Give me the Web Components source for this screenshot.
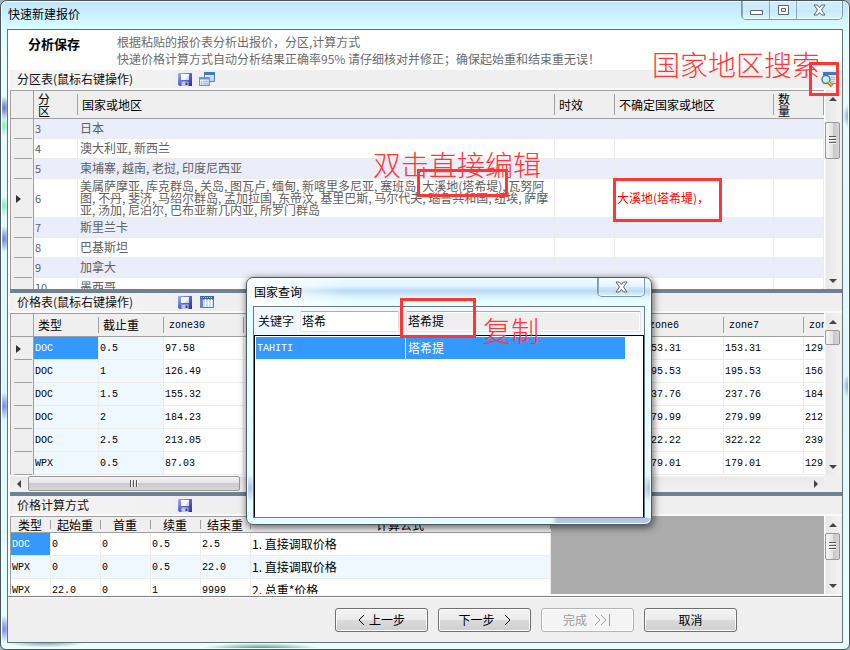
<!DOCTYPE html>
<html lang="zh-CN">
<head>
<meta charset="utf-8">
<title>快速新建报价</title>
<style>
  html, body { height: 100%; }
  body {
    margin: 0; overflow: hidden; background: #9fb3bd; color: #111;
    font: 12px/16px "Noto Sans CJK SC", "Liberation Sans", sans-serif;
    --ui: "Noto Sans CJK SC", "Liberation Sans", sans-serif;
    --mono: "Liberation Mono", "Noto Sans CJK SC", monospace;
    --face: #efefef; --line: #a0a0a0; --red: #ff3636; --sel: #3399ff;
  }
</style>
</head>
<body>
<app-window caption="快速新建报价">
  <page-intro slot="intro" heading="分析保存">
    根据粘贴的报价表分析出报价，分区,计算方式<br>
    快递价格计算方式自动分析结果正确率95% 请仔细核对并修正；确保起始重和结束重无误！
  </page-intro>
  <grid-pane caption="分区表(鼠标右键操作)" tools="save,windows" action="find" style="--offset:15px;--thumb:37px">
    <data-grid source="zones"></data-grid>
  </grid-pane>
  <grid-pane caption="价格表(鼠标右键操作)" tools="save,columns" horizontal plain style="--offset:0px;--thumb:15px">
    <data-grid source="prices"></data-grid>
  </grid-pane>
  <grid-pane caption="价格计算方式" tools="save" style="--offset:0px;--thumb:27px">
    <data-grid source="formulas"></data-grid>
  </grid-pane>
  <push-button slot="actions" label="上一步" before="&lt;"></push-button>
  <push-button slot="actions" label="下一步" after="&gt;"></push-button>
  <push-button slot="actions" label="完成" after="&gt;&gt;|" disabled></push-button>
  <push-button slot="actions" label="取消"></push-button>
</app-window>
<lookup-dialog caption="国家查询"></lookup-dialog>
<mark-box style="left:809px;top:62px;width:30px;height:34px"></mark-box>
<mark-box style="left:417px;top:169px;width:91px;height:28px"></mark-box>
<mark-box style="left:613px;top:178px;width:109px;height:44px"></mark-box>
<mark-box style="left:400px;top:298px;width:76px;height:40px"></mark-box>
<mark-note style="left:652px;top:44px">国家地区搜索</mark-note>
<mark-note style="left:373px;top:144px">双击直接编辑</mark-note>
<mark-note style="left:483px;top:310px">复制</mark-note>

<script>
const ICONS = {
  save: `<svg width="16" height="16" viewBox="0 0 16 16"><defs><linearGradient id="g" x1="0" y1="0" x2="1" y2="1"><stop offset="0" stop-color="#a9b0f6"/><stop offset=".5" stop-color="#5a64d0"/><stop offset="1" stop-color="#2c2c8c"/></linearGradient></defs><path d="M1 2h14v13H2.500L1 13.500z" fill="url(#g)"/><path d="M4 3h8v6H4z" fill="#f6f8ff"/><path d="M8 9l4-5v5z" fill="#cfd6f3"/><path d="M4.500 10.500h7V15h-7z" fill="#c3c8e2"/><path d="M8.500 11.500h2V14h-2z" fill="#3a3a88"/></svg>`,
  windows: `<svg width="16" height="16" viewBox="0 0 16 16"><defs><linearGradient id="w" x1="0" y1="0" x2="1" y2="1"><stop offset="0" stop-color="#fff"/><stop offset="1" stop-color="#a8caf0"/></linearGradient></defs><path d="M5.500 1.500h10v9h-10z" fill="url(#w)" stroke="#5482bb"/><path d="M5 1h11v3H5z" fill="#4a78c0"/><path d="M.5 6.500h10v8H.5z" fill="url(#w)" stroke="#6b94c4"/><path d="M0 6h11v2.500H0z" fill="#6d98d4"/><path d="M2.500 10v4M4 10.500h5M4 12.500h5" stroke="#a9c2e0"/></svg>`,
  columns: `<svg width="16" height="16" viewBox="0 0 16 16"><path d="M1.500 2.500h13v11h-13z" fill="#cfdff6" stroke="#5f78a8"/><path d="M1 2h14v3.500H1z" fill="#44649f"/><path d="M1 5h3v9H1z" fill="#6c88b8"/><path d="M2 3.500h12" stroke="#a9bfe3" stroke-dasharray="1 1"/><path d="M6.500 5v8M9.500 5v8M12.500 5v8" stroke="#fff"/></svg>`,
  find: `<svg width="18" height="17" viewBox="0 0 18 17"><path d="M3.500 1.500h13v11h-13z" fill="#dcebfc" stroke="#5b8ed0"/><path d="M3 1h14v3H3z" fill="#3e79cf"/><path d="M11 6.500h4M11 8.500h4M11 10.500h3" stroke="#9abce4"/><circle cx="6" cy="8.500" r="4" fill="#c5efff" stroke="#5c7687" stroke-width="1.500"/><path d="M3.800 8a2.500 2.500 0 0 1 2.500-2" stroke="#fff" fill="none"/><path d="M8.800 11.500l3.200 3.500" stroke="#a87b1c" stroke-width="3.500"/><path d="M8.700 11l3 3.300" stroke="#f2d064" stroke-width="1.300"/></svg>`,
  close: `<svg width="13" height="12" viewBox="0 0 13 12"><path d="M1 1h3.500l2 2.500L8.500 1H12L8.500 6l3.500 5H8.500l-2-2.500-2 2.500H1l3.500-5z" fill="#f8fcff" stroke="#5b6672" stroke-linejoin="round"/></svg>`,
  min: `<svg width="13" height="12" viewBox="0 0 13 12"><path d="M.5 6.500h12v4H.5z" fill="#fff" stroke="#5b6672"/></svg>`,
  max: `<svg width="13" height="12" viewBox="0 0 13 12"><path d="M1.500 1.500h10v9h-10z" fill="#fff" stroke="#5b6672"/><path d="M4.500 4.500h4v3h-4z" fill="#cfeefa" stroke="#5b6672"/></svg>`
};

class Base extends HTMLElement {
  connectedCallback() {
    if (this.shadowRoot) return;
    this.attachShadow({ mode: 'open' }).innerHTML = '<style>*{box-sizing:border-box}' + this.css() + '</style>' + this.html();
  }
  at(name) {
    return (this.getAttribute(name) || '').replace(/&/g, '&amp;').replace(/</g, '&lt;').replace(/>/g, '&gt;');
  }
}

customElements.define('window-controls', class extends Base {
  css() { return `
    :host { display: flex; border: 1px solid #7f98a5; border-top: 0; border-radius: 0 0 5px 5px; overflow: hidden; box-shadow: inset 0 0 0 1px #ffffffa0; }
    button { border: 0; border-left: 1px solid #8fa8b4; margin: 0; padding: 0; height: 18px; background: linear-gradient(#ffffff50, #ffffff10 50%, #b5d8e640 50%, #ffffff40); display: grid; place-items: center; }
    button:first-child { border-left: 0; }
    .min, .max { width: 27px; } .close { width: 46px; }`; }
  html() {
    const names = { min: '最小化', max: '最大化', close: '关闭' };
    return this.at('kinds').split(',').map(k => `<button class="${k}" aria-label="${names[k]}">${ICONS[k]}</button>`).join('');
  }
});

customElements.define('app-window', class extends Base {
  css() { return `
    :host { display: grid; grid-template-rows: 28px 1fr 6px; height: 100vh; box-sizing: border-box; padding: 0 6px 0 6px; border: 1px solid #47545c; border-radius: 7px 7px 6px 6px;
      background:
        radial-gradient(ellipse 7px 12px at 3px 107px, #6274c4, transparent),
        radial-gradient(ellipse 7px 13px at 3px 238px, #7680d0, transparent),
        radial-gradient(ellipse 7px 14px at 3px 405px, #8089d2, transparent),
        radial-gradient(ellipse 7px 14px at 3px 628px, #8089d2, transparent),
        radial-gradient(ellipse 6px 10px at 3px 125px, #8ceab8, transparent),
        radial-gradient(ellipse 6px 10px at 3px 205px, #8ceab8, transparent),
        radial-gradient(ellipse 6px 12px at 100% 115px, #7f9cc4, transparent),
        radial-gradient(ellipse 6px 12px at 100% 385px, #7f9cc4, transparent),
        radial-gradient(ellipse 60px 6px at 260px 100%, #3b8a78, transparent),
        radial-gradient(ellipse 40px 5px at 45px 99%, #809cb0, transparent),
        linear-gradient(#c2e3f7, #c9edff 10px, #d8ffff 28px, #e9fcff 60px, #dcf7fc 60%, #e9ffff);
      box-shadow: inset 0 0 0 1px #f4ffff; }
    header { display: flex; align-items: flex-start; justify-content: space-between; }
    h1 { margin: 0; padding: 5px 0 0 1px; font: 12px/16px var(--ui); color: #000; }
    main { border: 1px solid #66727a; background: #fff; display: grid; grid-template-rows: 40px 1fr 46px; min-height: 0; }
    .panes { min-height: 0; display: grid; grid-template-rows: 219fr 203fr 104fr; padding-left: 2px; }
    footer { border-top: 1px solid #808080; box-shadow: inset 0 1px #fff; background: var(--face); display: flex; justify-content: flex-end; align-items: flex-start; gap: 10px; padding: 11px 105px 0 0; }`; }
  html() { return `
    <header><h1>${this.at('caption')}</h1><window-controls kinds="min,max,close"></window-controls></header>
    <main><slot name="intro"></slot><div class="panes"><slot></slot></div><footer><slot name="actions"></slot></footer></main>`; }
});

customElements.define('page-intro', class extends Base {
  css() { return `
    :host { display: flex; color: #6b6b6b; }
    h2 { margin: 0; padding: 6px 0 0 20px; width: 109px; font: bold 13px/16px var(--ui); color: #000; }
    p { margin: 0; padding-top: 3px; line-height: 17px; white-space: nowrap; }`; }
  html() { return `<h2>${this.at('heading')}</h2><p><slot></slot></p>`; }
});

customElements.define('scroll-bar', class extends Base {
  css() { return `
    :host { display: flex; flex-direction: column; width: 18px; background: linear-gradient(90deg, #fff 1px, #e8e8e8 2px, #f2f2f2 16px, #eee); }
    :host([across]) { flex-direction: row; width: auto; height: 17px; background: linear-gradient(#fff 1px, #e8e8e8 2px, #f2f2f2); }
    i { flex: none; width: 17px; height: 17px; display: grid; place-items: center; }
    i::before { content: ""; border: 4px solid transparent; border-bottom: 4px solid #444; border-top: 0; }
    i.end::before { transform: rotate(180deg); }
    :host([across]) i::before { transform: rotate(-90deg); }
    :host([across]) i.end::before { transform: rotate(90deg); }
    b { flex: none; margin-top: var(--offset); height: var(--thumb); width: 15px; margin-left: 1px; border: 1px solid #989898; border-radius: 2px; background: linear-gradient(90deg, #f5f5f5, #e4e4e4 50%, #c6c6c8 51%, #d6d6d8); display: grid; place-items: center; }
    :host([across]) b { margin: 1px 0 0 1px; height: 15px; width: var(--across, 212px); background: linear-gradient(#f5f5f5, #e4e4e4 45%, #cbcbcd 50%, #d6d6d8); }
    b::before { content: ""; width: 7px; height: 9px; background: repeating-linear-gradient(#555 0 1px, #f7f7f7 1px 2px, transparent 2px 3px); }
    :host([across]) b::before { width: 9px; height: 7px; background: repeating-linear-gradient(90deg, #555 0 1px, #f7f7f7 1px 2px, transparent 2px 3px); }
    :host([plain]) b::before { display: none; }
    span { flex: 1; }`; }
  html() { return '<i></i><b></b><span></span><i class="end"></i>'; }
});

customElements.define('grid-pane', class extends Base {
  css() { return `
    :host { display: grid; grid-template-rows: 18px 1fr auto; min-height: 0; min-width: 0; border-top: 4px solid #718093; background: #fafafa; }
    :host(:first-of-type) { border-top: 0; }
    header { background: var(--face); display: flex; align-items: center; padding: 0 4px 0 3px; }
    h2 { margin: 0; padding-left: 4px; width: 164px; font: 12px/18px var(--ui); color: #111; background: linear-gradient(90deg, #f3f3f3, #f1f1f1 160px, var(--face)); }
    button { border: 0; padding: 0; margin-right: 6px; background: none; height: 18px; display: grid; place-items: center; }
    button.last { margin: 0 0 0 auto; }
    .body { display: grid; grid-template-columns: 1fr 18px; min-height: 0; margin-top: 2px; overflow: hidden; }
    .foot { display: grid; grid-template-columns: 1fr 18px; background: var(--face); }
    :host(:last-of-type) { padding-bottom: 2px; }`; }
  html() {
    const names = { save: '保存', windows: '窗口', columns: '列', find: '国家查询' };
    const btn = (k, c) => `<button class="${c}" aria-label="${names[k]}">${ICONS[k]}</button>`;
    return `<header><h2>${this.at('caption')}</h2>${this.at('tools').split(',').map(k => btn(k, '')).join('')}${this.at('action') ? btn(this.at('action'), 'last') : ''}</header>
      <div class="body"><slot></slot><scroll-bar ${this.hasAttribute('plain') ? 'plain' : ''}></scroll-bar></div>
      ${this.hasAttribute('horizontal') ? '<div class="foot"><scroll-bar across></scroll-bar></div>' : ''}`;
  }
});

const SOURCES = {
  zones: {
    cols: [23, 44, 0, 60, 159, 50],
    head: ['', '分<br>区', '国家或地区', '时效', '不确定国家或地区', '数<br>量'],
    rows: [
      ['', '3', '日本', '', '', ''],
      ['', '4', '澳大利亚, 新西兰', '', '', ''],
      ['', '5', '柬埔寨, 越南, 老挝, 印度尼西亚', '', '', ''],
      ['▸', '6', '美属萨摩亚, 库克群岛, 关岛, 图瓦卢, 缅甸, 新喀里多尼亚, 塞班岛, 大溪地(塔希堤), 瓦努阿<br>图, 不丹, 斐济, 马绍尔群岛, 孟加拉国, 东帝汶, 基里巴斯, 马尔代夫, 瑙鲁共和国, 纽埃, 萨摩<br>亚, 汤加, 尼泊尔, 巴布亚新几内亚, 所罗门群岛', '', '<em>大溪地(塔希堤)，</em>', ''],
      ['', '7', '斯里兰卡', '', '', ''],
      ['', '8', '巴基斯坦', '', '', ''],
      ['', '9', '加拿大', '', '', ''],
      ['', '10', '墨西哥', '', '', '']
    ],
    css: `
      th { height: 29px; font-size: 12px; line-height: 12px; padding-left: 4px; }
      td { height: 20px; line-height: 12px; color: #606060; padding-bottom: 1px; }
      td:nth-child(2) { padding-left: 1px; font-size: 11px; }
      tbody tr:nth-child(odd) td:not(.rh) { background: #ebedfa; }
      tbody tr:nth-child(4) td { height: 39px; }
      em { font-style: normal; color: #f00; }`
  },
  prices: {
    cols: [23, 65, 65, 80, 80, 80, 80, 80, 80, 80, 80, 21],
    head: ['', '类型', '截止重', 'zone30', '', '', '', '', '', 'zone6', 'zone7', 'zone8'],
    rows: [
      ['▸', 'DOC', '0.5', '97.58', '', '', '', '', '', '153.31', '153.31', '129'],
      ['', 'DOC', '1', '126.49', '', '', '', '', '', '195.53', '195.53', '156'],
      ['', 'DOC', '1.5', '155.32', '', '', '', '', '', '237.76', '237.76', '184'],
      ['', 'DOC', '2', '184.23', '', '', '', '', '', '279.99', '279.99', '212'],
      ['', 'DOC', '2.5', '213.05', '', '', '', '', '', '322.22', '322.22', '239'],
      ['', 'WPX', '0.5', '87.03', '', '', '', '', '', '179.01', '179.01', '129']
    ],
    css: `
      th { height: 24px; padding-left: 4px; }
      th:nth-child(n+4) { font: 10px/16px var(--mono); padding: 2px 0 0 5px; }
      td { height: 23px; font: 10px/16px var(--mono); padding: 2px 0 0 1px; }
      td:nth-child(2), td:nth-child(3) { background: #eff7ff; }
      tbody tr:first-child td:nth-child(2) { background: var(--sel); color: #fff; }`
  },
  formulas: {
    cols: [40, 50, 50, 50, 50, 300],
    head: ['类型', '起始重', '首重', '续重', '结束重', '计算公式'],
    rows: [
      ['DOC', '0', '0', '0.5', '2.5', '1. 直接调取价格'],
      ['WPX', '0', '0', '0.5', '22.0', '1. 直接调取价格'],
      ['WPX', '22.0', '0', '1', '9999', '2. 总重*价格']
    ],
    css: `
      :host { background: #ababab; border-left: 0; }
      table { width: auto; border-left: 1px solid #a0a0a0; }
      th { height: 17px; line-height: 14px; text-align: center; padding: 0 2px 0 0; }
      td { height: 23px; font: 10px/16px var(--mono); padding: 2px 0 0 1px; }
      td:last-child { font: 12px/16px var(--ui); padding-top: 0; }
      tbody tr { background: #fff; }
      tbody tr:nth-child(even) { background: #eff7ff; }
      tbody tr:first-child td:first-child { background: var(--sel); color: #fff; }`
  }
};

customElements.define('data-grid', class extends Base {
  css() { return `
    :host { display: block; min-width: 0; min-height: 0; overflow: hidden; background: #fff; border-left: 1px solid var(--line); }
    table { table-layout: fixed; width: 100%; border-collapse: separate; border-spacing: 0; }
    th, td { padding: 0 0 0 2px; text-align: left; white-space: nowrap; overflow: hidden; font-weight: 400; }
    th { background: linear-gradient(var(--line), var(--line)) right center / 1px calc(100% - 6px) no-repeat var(--face); border-top: 1px solid var(--line); border-bottom: 1px solid var(--line); color: #000; }
    td { border-right: 1px solid #ececec; border-bottom: 1px solid #ececec; color: #000; }
    ${SOURCES[this.at('source')].css}
    th.rh { background: var(--face); border-right: 1px solid var(--line); }
    td.rh { padding: 0 0 0 5px; border-right: 1px solid var(--line); border-bottom: 0; background: linear-gradient(var(--line), var(--line)) 3px 100% / 18px 1px no-repeat var(--face); }
    .rh i { display: block; width: 0; border: 4px solid transparent; border-left: 5px solid #333; border-right: 0; }`; }
  html() {
    const s = SOURCES[this.at('source')];
    const rh = s.cols[0] === 23;
    const cell = (c, i) => rh && i === 0 ? `<td class="rh">${c ? '<i></i>' : ''}</td>` : `<td>${c}</td>`;
    return `<table><colgroup>${s.cols.map(w => `<col${w ? ` style="width:${w}px"` : ''}>`).join('')}</colgroup>
      <thead><tr>${s.head.map((h, i) => `<th${rh && i === 0 ? ' class="rh"' : ''}>${h}</th>`).join('')}</tr></thead>
      <tbody>${s.rows.map(r => `<tr>${r.map(cell).join('')}</tr>`).join('')}</tbody></table>`;
  }
});

customElements.define('push-button', class extends Base {
  css() { return `
    :host { display: block; }
    button { width: 93px; height: 24px; padding: 0; border: 1px solid #707070; border-radius: 3px; color: #000; font: 12px/16px var(--ui); box-shadow: inset 0 0 0 1px #fcfcfc; background: linear-gradient(#f3f3f3, #ebebeb 48%, #dadada 52%, #cfcfcf); display: flex; align-items: center; justify-content: center; gap: 4px; }
    button:disabled { color: #9a9a9a; border-color: #b0b5b9; background: #f4f4f4; }
    svg { fill: none; stroke: currentColor; }`; }
  html() {
    const art = {
      '&lt;': '<svg width="7" height="12"><path d="M6 1L1 6l5 5"/></svg>',
      '&gt;': '<svg width="7" height="12" style="margin-left:5px"><path d="M1 1l5 5-5 5"/></svg>',
      '&gt;&gt;|': '<svg width="18" height="12" style="margin-left:3px"><path d="M1 1l5 5-5 5M7 1l5 5-5 5M15.500 0v12"/></svg>'
    };
    return `<button ${this.hasAttribute('disabled') ? 'disabled' : ''}>${art[this.at('before')] || ''}<span>${this.at('label')}</span>${art[this.at('after')] || ''}</button>`;
  }
});

customElements.define('lookup-dialog', class extends Base {
  css() { return `
    :host { position: absolute; left: 246px; top: 277px; width: 406px; height: 248px; box-sizing: border-box; border: 1px solid #4e5a62; border-radius: 7px; padding: 0 6px 6px; display: grid; grid-template-rows: 28px 1fr;
      background:
        radial-gradient(ellipse 7px 14px at 3px 210px, #a9c4ea, transparent),
        radial-gradient(ellipse 7px 14px at 402px 210px, #a9c4ea, transparent),
        linear-gradient(90deg, transparent 305px, #b0c8e4 310px) 0 100% / 100% 6px no-repeat,
        linear-gradient(90deg, #ffffffd0 30px, transparent 100px) 0 0 / 100% 28px no-repeat,
        linear-gradient(#eefbff, #e2f4ff 8px, #b9d6f4 13px, #d8f2ff 18px, #e8ffff 24px, #e5fbff);
      box-shadow: inset 0 0 0 1px #f6ffff, 1px 2px 7px 1px #0008; }
    header { display: flex; align-items: flex-start; justify-content: space-between; }
    h2 { margin: 0; padding: 6px 0 0 1px; font: 12px/16px var(--ui); color: #000; }
    section { border: 1px solid #6d777e; background: #fff; display: grid; grid-template-rows: 28px 1fr; }
    form { display: flex; align-items: center; background: #eff7ff; padding: 0 3px 0 4px; }
    label { width: 42px; }
    input { height: 21px; min-width: 0; border: 1px solid #e2e3ea; border-top-color: #abadb3; border-radius: 2px; padding: 0 2px 2px 1px; font: 12px/16px var(--ui); color: #000; background: #fff; }
    #kw { width: 99px; margin-right: 7px; }
    #res { flex: 1; background: var(--face); box-shadow: inset 0 0 0 1px #fff; }
    .list { border: 1px solid #000; border-bottom: 0; padding: 1px 18px 0 1px; }
    table { width: 100%; table-layout: fixed; border-collapse: separate; border-spacing: 0; }
    td { height: 22px; padding: 0 0 0 2px; background: var(--sel); color: #fff; font: 12px/16px var(--ui); }
    td:first-child { width: 150px; border-right: 1px solid #dcebff; font: 10px/16px var(--mono); padding: 2px 0 0 1px; }`; }
  html() { return `
    <header><h2>${this.at('caption')}</h2><window-controls kinds="close"></window-controls></header>
    <section><form><label for="kw">关键字</label><input id="kw" value="塔希"><input id="res" aria-label="结果" value="塔希提" readonly></form>
    <div class="list"><table><tbody><tr><td>TAHITI</td><td>塔希提</td></tr></tbody></table></div></section>`; }
});

customElements.define('mark-box', class extends Base {
  css() { return ':host { position: absolute; box-sizing: border-box; border: 3px solid var(--red); }'; }
  html() { return ''; }
});
customElements.define('mark-note', class extends Base {
  css() { return ':host { position: absolute; color: var(--red); font: 300 28px/40px var(--ui); white-space: nowrap; }'; }
  html() { return '<slot></slot>'; }
});
</script>
</body>
</html>
